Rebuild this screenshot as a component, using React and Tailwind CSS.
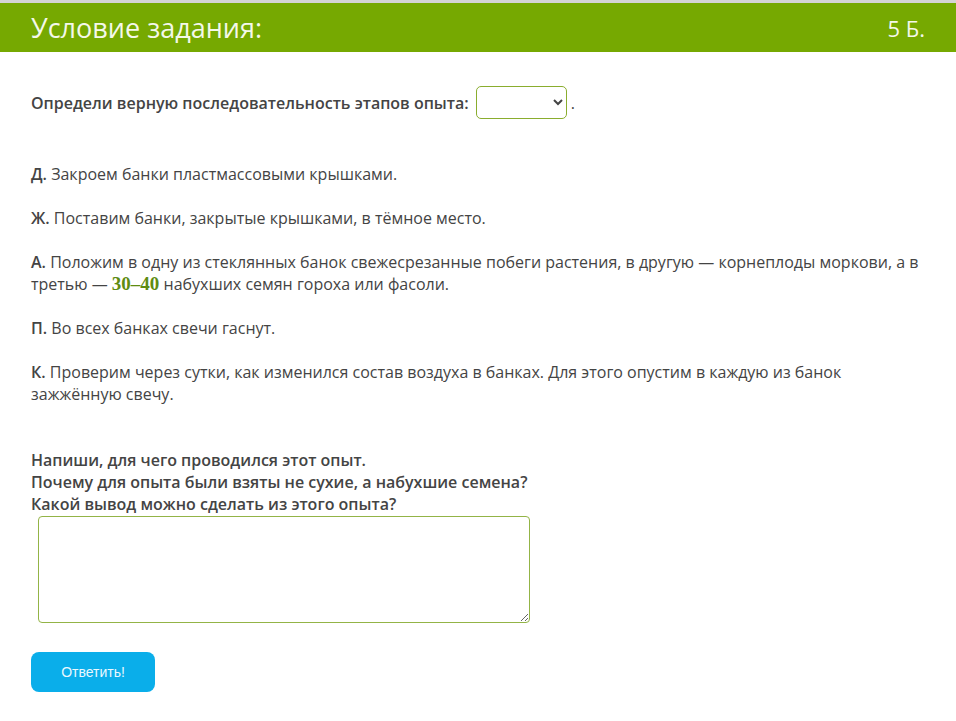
import React from "react";

const items = [
  { letter: "Д", text: "Закроем банки пластмассовыми крышками." },
  { letter: "Ж", text: "Поставим банки, закрытые крышками, в тёмное место." },
  {
    letter: "А",
    text: (
      <>
        Положим в одну из стеклянных банок свежесрезанные побеги растения, в другую — корнеплоды моркови, а в
        третью —{" "}
        <span className="font-['Liberation_Serif',serif] text-[19px] font-semibold text-[#5e8c12]">30–40</span>{" "}
        набухших семян гороха или фасоли.
      </>
    ),
  },
  { letter: "П", text: "Во всех банках свечи гаснут." },
  {
    letter: "К",
    text: "Проверим через сутки, как изменился состав воздуха в банках. Для этого опустим в каждую из банок зажжённую свечу.",
  },
];

export default function App() {
  return (
    <div className="min-h-[721px] bg-white font-['Open_Sans',sans-serif] text-[#444]">
      <div className="border-t-[3px] border-[#d4d4d4]">
        <div className="flex h-[49px] items-center justify-between bg-[#76a901] px-[31px] text-[#f4f8ea]">
          <h1 className="text-[27px] leading-none">Условие задания:</h1>
          <span className="text-[22px] leading-none">5 Б.</span>
        </div>
      </div>

      <div className="px-[31px] pr-[34px] text-[16px] leading-[22px]">
        <div className="mt-[34px] flex items-center font-semibold">
          <span>Определи верную последовательность этапов опыта:</span>
          <select className="ml-[7px] h-[33px] w-[91px] appearance-auto rounded-[5px] border border-[#8aad2e] bg-white px-1 text-[14px]">
            <option></option>
          </select>
          <span className="ml-[4px] font-normal">.</span>
        </div>

        <div className="mt-[44px] flex flex-col gap-[22px]">
          {items.map((item) => (
            <p key={item.letter}>
              <span className="font-semibold">{item.letter}.</span> {item.text}
            </p>
          ))}
        </div>

        <div className="mt-[44px] font-semibold">
          <p>Напиши, для чего проводился этот опыт.</p>
          <p>Почему для опыта были взяты не сухие, а набухшие семена?</p>
          <p>Какой вывод можно сделать из этого опыта?</p>
        </div>

        <textarea className="ml-[7px] mt-[1px] block h-[107px] w-[492px] rounded-[4px] border border-[#93b446] bg-white outline-none" />

        <button className="mt-[29px] h-[40px] w-[124px] rounded-[8px] bg-[#0aaeea] font-['Liberation_Sans',sans-serif] text-[14px] text-[#eaf8ff]">
          Ответить!
        </button>
      </div>
    </div>
  );
}
